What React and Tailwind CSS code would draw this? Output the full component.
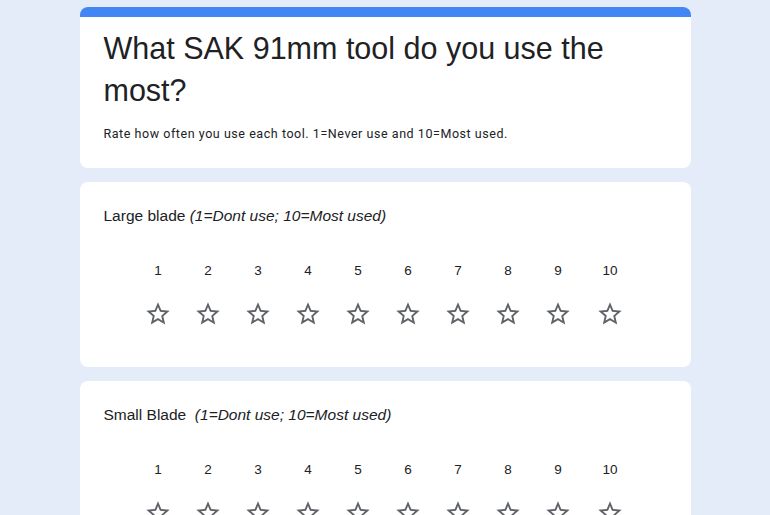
import React from "react";

const tools = ["Large blade", "Small Blade"];
const scale = [1, 2, 3, 4, 5, 6, 7, 8, 9, 10];

function StarOutline() {
  return (
    <svg width="28" height="28" viewBox="0 0 24 24" fill="#5f6368">
      <path d="M22 9.24l-7.19-.62L12 2 9.19 8.63 2 9.24l5.46 4.73L5.82 21 12 17.27 18.18 21l-1.63-7.03L22 9.24zM12 15.4l-3.76 2.27 1-4.28-3.32-2.88 4.38-.38L12 6.1l1.71 4.04 4.38.38-3.32 2.88 1 4.28L12 15.4z" />
    </svg>
  );
}

function RatingQuestion({ name }) {
  return (
    <div className="bg-white rounded-lg px-6 pt-[22px] pb-[39px]">
      <div className="text-[15.5px] leading-6 text-[#202124] whitespace-pre">
        {name}
        {name === "Small Blade" ? "  " : " "}
        <span className="italic">(1=Dont use; 10=Most used)</span>
      </div>
      <div className="flex justify-center mt-[33px]">
        {scale.map((n) => (
          <div
            key={n}
            className={
              n === 10
                ? "w-[54px] flex flex-col items-center"
                : "w-[50px] flex flex-col items-center"
            }
          >
            <span className="text-[13.5px] leading-5 text-[#202124]">{n}</span>
            <span className="mt-[19px]">
              <StarOutline />
            </span>
          </div>
        ))}
      </div>
    </div>
  );
}

export default function App() {
  return (
    <div
      className="min-h-screen bg-[#e4ecfa] pt-[7px] pb-10"
      style={{ fontFamily: '"Liberation Sans", Arial, sans-serif' }}
    >
      <div className="w-[611px] mx-auto flex flex-col gap-[14px]">
        <div className="bg-white rounded-lg overflow-hidden">
          <div className="h-[10px] bg-[#4285f4]" />
          <div className="px-6 pt-[10px] pb-[25px]">
            <h1 className="text-[30.5px] leading-[42px] text-[#202124]">
              What SAK 91mm tool do you use the most?
            </h1>
            <p
              className="mt-[14px] text-[12.5px] leading-[18px] tracking-[0.55px] text-[#202124]"
              style={{ fontFamily: "Roboto, sans-serif" }}
            >
              Rate how often you use each tool. 1=Never use and 10=Most used.
            </p>
          </div>
        </div>
        {tools.map((t) => (
          <RatingQuestion key={t} name={t} />
        ))}
      </div>
    </div>
  );
}
